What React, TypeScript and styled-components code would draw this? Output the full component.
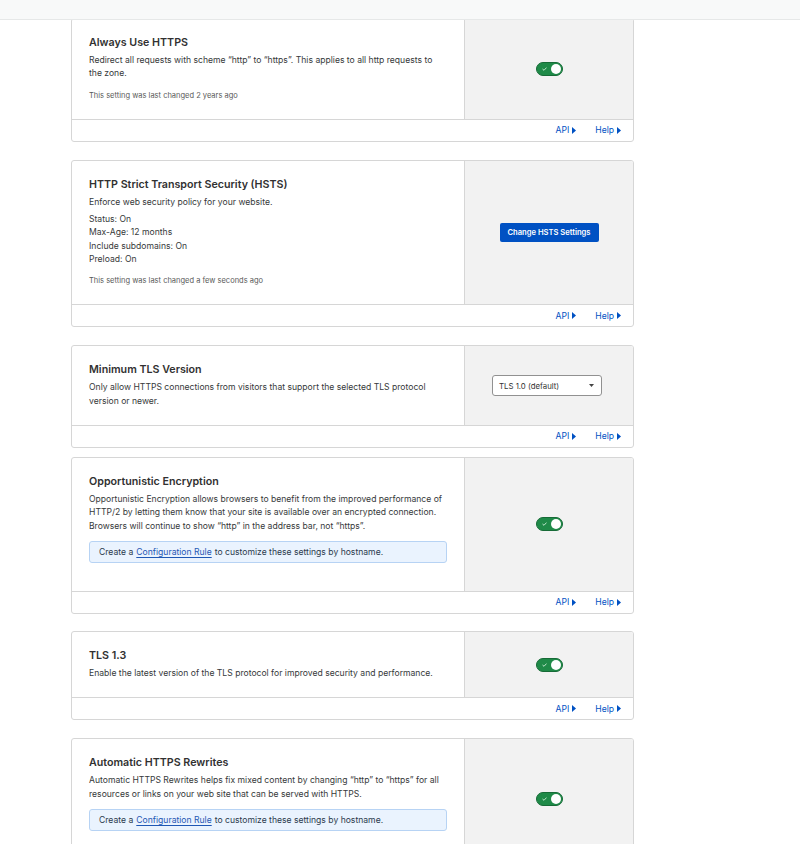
import React from 'react';
import styled, { createGlobalStyle } from 'styled-components';

const GlobalStyle = createGlobalStyle`
  html, body {
    margin: 0;
    padding: 0;
    background: #ffffff;
  }
  body {
    font-family: Inter, "Liberation Sans", Arial, sans-serif;
    color: #36393a;
  }
`;

const Page = styled.div`
  width: 800px;
  min-height: 844px;
  overflow: hidden;
`;

const TopBar = styled.div`
  position: relative;
  z-index: 1;
  height: 20px;
  box-sizing: border-box;
  background: #f8f9f9;
  border-bottom: 1px solid #e6e8e8;
`;

const List = styled.div`
  display: flex;
  flex-direction: column;
  margin-left: 71px;
  width: 563px;
`;

const Card = styled.section<{ $gap: number }>`
  box-sizing: border-box;
  border: 1px solid #d6d6d6;
  border-radius: 3px;
  background: #fff;
  margin-top: ${(p) => p.$gap}px;
  overflow: hidden;
`;

const CardBody = styled.div`
  display: grid;
  grid-template-columns: 392px 1fr;
`;

const Main = styled.div`
  padding: 17px 17px 17px 17px;
`;

const Side = styled.div`
  background: #f2f2f2;
  border-left: 1px solid #d6d6d6;
  display: flex;
  align-items: center;
  justify-content: center;
`;

const Title = styled.h3`
  margin: 0 0 4px;
  font-size: 10.7px;
  line-height: 14px;
  font-weight: 600;
  color: #313131;
`;

const Text = styled.p`
  margin: 0;
  font-size: 8.6px;
  line-height: 13.33px;
  color: #36393a;
`;

const Details = styled.div`
  margin-top: 4px;
`;

const Changed = styled.p`
  margin: 9px 0 0;
  font-size: 7.5px;
  line-height: 12px;
  color: #595959;
`;

const Notice = styled.div`
  margin: 8px 0 11px;
  height: 22px;
  box-sizing: border-box;
  display: flex;
  align-items: center;
  padding: 0 9px;
  background: #eaf3fe;
  border: 1px solid #b7d3f4;
  border-radius: 3px;
  font-size: 8.6px;
  color: #2b3a4d;
`;

const RuleLink = styled.a`
  color: #1f57b4;
  text-decoration: underline;
  text-underline-offset: 1.5px;
  margin: 0 3px;
`;

const Footer = styled.div`
  height: 21px;
  border-top: 1px solid #d6d6d6;
  display: flex;
  align-items: center;
  justify-content: flex-end;
  gap: 19px;
  padding-right: 12px;
`;

const DocLink = styled.a`
  display: inline-flex;
  align-items: center;
  gap: 3px;
  font-size: 8.6px;
  color: #0051c3;
  text-decoration: none;
`;

const Toggle = styled.span`
  position: relative;
  display: inline-flex;
  align-items: center;
  width: 27px;
  height: 14px;
  box-sizing: border-box;
  border-radius: 7px;
  background: #1f8a48;
  border: 1px solid #176b37;
  padding-left: 5px;
`;

const Knob = styled.span`
  position: absolute;
  right: 1px;
  top: 1px;
  width: 10px;
  height: 10px;
  border-radius: 50%;
  background: #fff;
`;

const Button = styled.button`
  width: 99px;
  height: 19px;
  border: none;
  border-radius: 2px;
  background: #0051c3;
  color: #fff;
  font-family: inherit;
  font-size: 7.6px;
  font-weight: 600;
  padding: 0;
`;

const Select = styled.div`
  width: 110px;
  height: 21px;
  box-sizing: border-box;
  margin-right: 4px;
  border: 1px solid #919191;
  border-radius: 3px;
  background: #fff;
  display: flex;
  align-items: center;
  justify-content: space-between;
  padding: 0 7px 0 6px;
  font-size: 7.8px;
  color: #333;
`;

const Arrow = () => (
  <svg width="4" height="7" viewBox="0 0 4 7">
    <path d="M0 0 L4 3.5 L0 7 Z" fill="#0051c3" />
  </svg>
);

const Caret = () => (
  <svg width="5" height="3" viewBox="0 0 5 3">
    <path d="M0 0 L5 0 L2.5 3 Z" fill="#444" />
  </svg>
);

const Switch = () => (
  <Toggle>
    <svg width="5" height="4" viewBox="0 0 5 4">
      <path d="M0.5 2 L2 3.3 L4.5 0.6" stroke="#cfeed8" strokeWidth="0.9" fill="none" />
    </svg>
    <Knob />
  </Toggle>
);

const RuleNotice = () => (
  <Notice>
    Create a<RuleLink href="#">Configuration Rule</RuleLink>to customize these settings by hostname.
  </Notice>
);

interface SettingProps {
  gap: number;
  title: string;
  children: React.ReactNode;
  control: React.ReactNode;
}

const Setting: React.FC<SettingProps> = ({ gap, title, children, control }) => (
  <Card $gap={gap}>
    <CardBody>
      <Main>
        <Title>{title}</Title>
        {children}
      </Main>
      <Side>{control}</Side>
    </CardBody>
    <Footer>
      <DocLink href="#">API<Arrow /></DocLink>
      <DocLink href="#">Help<Arrow /></DocLink>
    </Footer>
  </Card>
);

const App: React.FC = () => {
  return (
    <Page>
      <GlobalStyle />
      <TopBar />
      <List>
        <Setting gap={-2} title="Always Use HTTPS" control={<Switch />}>
          <Text>
            Redirect all requests with scheme “http” to “https”. This applies to all http requests to
            the zone.
          </Text>
          <Changed>This setting was last changed 2 years ago</Changed>
        </Setting>

        <Setting
          gap={18}
          title="HTTP Strict Transport Security (HSTS)"
          control={<Button>Change HSTS Settings</Button>}
        >
          <Text>Enforce web security policy for your website.</Text>
          <Details>
            <Text>Status: On</Text>
            <Text>Max-Age: 12 months</Text>
            <Text>Include subdomains: On</Text>
            <Text>Preload: On</Text>
          </Details>
          <Changed>This setting was last changed a few seconds ago</Changed>
        </Setting>

        <Setting
          gap={18}
          title="Minimum TLS Version"
          control={
            <Select>
              <span>TLS 1.0 (default)</span>
              <Caret />
            </Select>
          }
        >
          <Text>
            Only allow HTTPS connections from visitors that support the selected TLS protocol
            version or newer.
          </Text>
        </Setting>

        <Setting gap={9} title="Opportunistic Encryption" control={<Switch />}>
          <Text>
            Opportunistic Encryption allows browsers to benefit from the improved performance of
            HTTP/2 by letting them know that your site is available over an encrypted connection.
            Browsers will continue to show “http” in the address bar, not “https”.
          </Text>
          <RuleNotice />
        </Setting>

        <Setting gap={17} title="TLS 1.3" control={<Switch />}>
          <Text>Enable the latest version of the TLS protocol for improved security and performance.</Text>
        </Setting>

        <Setting gap={18} title="Automatic HTTPS Rewrites" control={<Switch />}>
          <Text>
            Automatic HTTPS Rewrites helps fix mixed content by changing “http” to “https” for all
            resources or links on your web site that can be served with HTTPS.
          </Text>
          <RuleNotice />
        </Setting>
      </List>
    </Page>
  );
};

export default App;
